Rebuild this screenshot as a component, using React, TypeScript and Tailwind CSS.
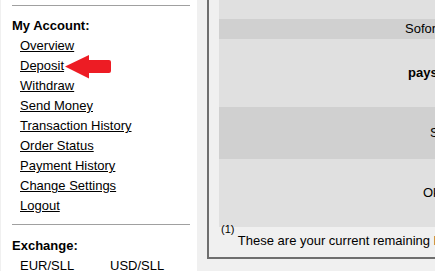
import React from "react";

const links = [
  "Overview",
  "Deposit",
  "Withdraw",
  "Send Money",
  "Transaction History",
  "Order Status",
  "Payment History",
  "Change Settings",
  "Logout",
];

export default function App() {
  return (
    <div
      className="flex w-[435px] h-[271px] overflow-hidden text-[13px] text-black bg-[#f0f0f0]"
      style={{ fontFamily: '"Liberation Sans", Arial, sans-serif' }}
    >
      <div className="relative flex flex-col w-[198px] shrink-0 bg-white border-l border-[#f0f0f0] border-r border-[#c4c4c4] overflow-hidden">
        <div className="shrink-0 ml-[11px] mt-[5px] w-[178px] h-px bg-[#a0a0a0]" />
        <div className="shrink-0 mt-[10px] pl-[11px] leading-[20px] font-bold">My Account:</div>
        <div className="shrink-0 flex flex-col pl-[19px] leading-[20px]">
          {links.map((l) => (
            <a key={l} href="#" className="underline w-fit">
              {l}
            </a>
          ))}
        </div>
        <div className="shrink-0 ml-[11px] mt-[8px] w-[178px] h-px bg-[#a0a0a0]" />
        <div className="shrink-0 mt-[11px] pl-[11px] leading-[20px] font-bold">Exchange:</div>
        <div className="shrink-0 flex pl-[19px] leading-[20px]">
          <span className="w-[90px]">EUR/SLL</span>
          <span>USD/SLL</span>
        </div>
        <svg
          className="absolute left-[63px] top-[54px]"
          width="48"
          height="26"
          viewBox="0 0 48 26"
        >
          <path
            d="M1 12.5 L25 1 L25 6 L45 6 Q47 6 47 8 L47 17 Q47 19 45 19 L25 19 L25 24.5 Z"
            fill="#ed1c24"
          />
        </svg>
      </div>
      <div className="flex-1 min-w-0 pl-[9px]">
        <div className="flex flex-col h-[259px] border-l-2 border-b-2 border-[#6e6e6e] pl-[10px] overflow-hidden">
          <div className="shrink-0 flex flex-col bg-[#e0e0e0] whitespace-nowrap leading-[20px]">
            <div className="h-[19px]" />
            <div className="h-[20px] flex items-center bg-[#d0d0d0] pl-[186px]">Sofort Überweisung</div>
            <div className="h-[68px] flex items-center pl-[189px] font-bold">paysafecard</div>
            <div className="h-[52px] flex items-center bg-[#d0d0d0] pl-[211px]">Skrill</div>
            <div className="h-[68px] flex items-center pl-[204px]">OkPay</div>
          </div>
          <div className="shrink-0 pt-[4px] pl-[2px] leading-[20px] whitespace-nowrap">
            <span className="relative -top-[12px] text-[11px]">(1)</span> These are your current remaining limits
          </div>
        </div>
      </div>
    </div>
  );
}
